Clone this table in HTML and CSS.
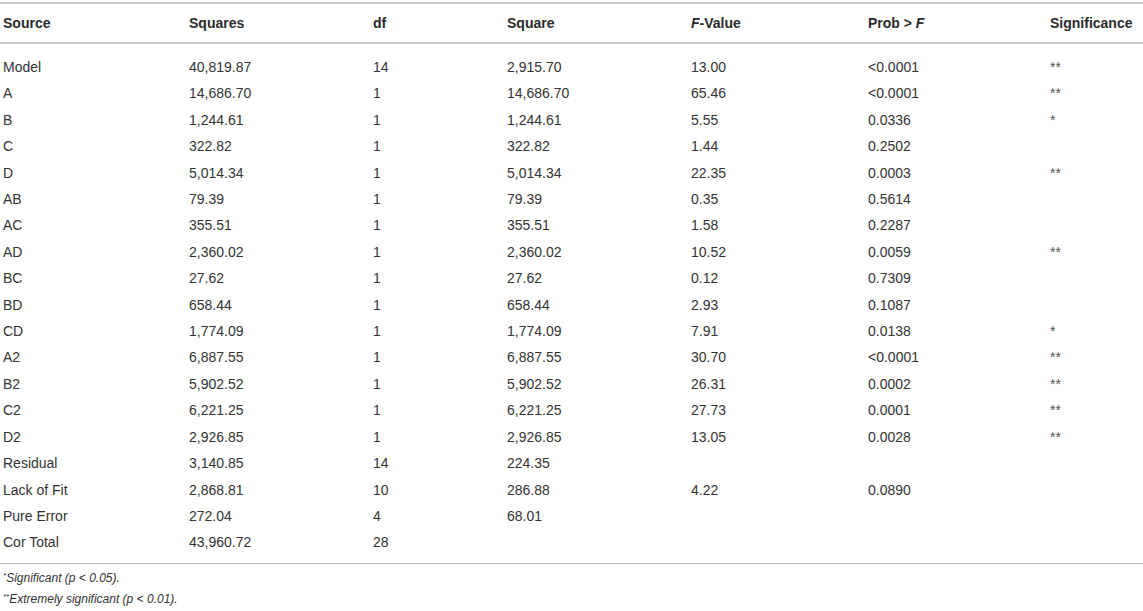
FILE: index.html
```html
<!DOCTYPE html>
<html lang="en">
<head>
<meta charset="utf-8">
<title>ANOVA table</title>
<link rel="stylesheet" href="styles.css">
</head>
<body>
<div class="wrap">
<table class="anova">
<colgroup>
<col class="c1"><col class="c2"><col class="c3"><col class="c4"><col class="c5"><col class="c6"><col class="c7">
</colgroup>
<thead>
<tr><th>Source</th><th>Squares</th><th>df</th><th>Square</th><th><i>F</i>-Value</th><th>Prob &gt; <i>F</i></th><th>Significance</th></tr>
</thead>
<tbody>
<tr><td>Model</td><td>40,819.87</td><td>14</td><td>2,915.70</td><td>13.00</td><td>&lt;0.0001</td><td class="sig">**</td></tr>
<tr><td>A</td><td>14,686.70</td><td>1</td><td>14,686.70</td><td>65.46</td><td>&lt;0.0001</td><td class="sig">**</td></tr>
<tr><td>B</td><td>1,244.61</td><td>1</td><td>1,244.61</td><td>5.55</td><td>0.0336</td><td class="sig">*</td></tr>
<tr><td>C</td><td>322.82</td><td>1</td><td>322.82</td><td>1.44</td><td>0.2502</td><td class="sig"></td></tr>
<tr><td>D</td><td>5,014.34</td><td>1</td><td>5,014.34</td><td>22.35</td><td>0.0003</td><td class="sig">**</td></tr>
<tr><td>AB</td><td>79.39</td><td>1</td><td>79.39</td><td>0.35</td><td>0.5614</td><td class="sig"></td></tr>
<tr><td>AC</td><td>355.51</td><td>1</td><td>355.51</td><td>1.58</td><td>0.2287</td><td class="sig"></td></tr>
<tr><td>AD</td><td>2,360.02</td><td>1</td><td>2,360.02</td><td>10.52</td><td>0.0059</td><td class="sig">**</td></tr>
<tr><td>BC</td><td>27.62</td><td>1</td><td>27.62</td><td>0.12</td><td>0.7309</td><td class="sig"></td></tr>
<tr><td>BD</td><td>658.44</td><td>1</td><td>658.44</td><td>2.93</td><td>0.1087</td><td class="sig"></td></tr>
<tr><td>CD</td><td>1,774.09</td><td>1</td><td>1,774.09</td><td>7.91</td><td>0.0138</td><td class="sig">*</td></tr>
<tr><td>A2</td><td>6,887.55</td><td>1</td><td>6,887.55</td><td>30.70</td><td>&lt;0.0001</td><td class="sig">**</td></tr>
<tr><td>B2</td><td>5,902.52</td><td>1</td><td>5,902.52</td><td>26.31</td><td>0.0002</td><td class="sig">**</td></tr>
<tr><td>C2</td><td>6,221.25</td><td>1</td><td>6,221.25</td><td>27.73</td><td>0.0001</td><td class="sig">**</td></tr>
<tr><td>D2</td><td>2,926.85</td><td>1</td><td>2,926.85</td><td>13.05</td><td>0.0028</td><td class="sig">**</td></tr>
<tr><td>Residual</td><td>3,140.85</td><td>14</td><td>224.35</td><td></td><td></td><td class="sig"></td></tr>
<tr><td>Lack of Fit</td><td>2,868.81</td><td>10</td><td>286.88</td><td>4.22</td><td>0.0890</td><td class="sig"></td></tr>
<tr><td>Pure Error</td><td>272.04</td><td>4</td><td>68.01</td><td></td><td></td><td class="sig"></td></tr>
<tr><td>Cor Total</td><td>43,960.72</td><td>28</td><td></td><td></td><td></td><td class="sig"></td></tr>
</tbody>
</table>
<div class="notes">
<p><sup>*</sup>Significant (p &lt; 0.05).</p>
<p><sup>**</sup>Extremely significant (p &lt; 0.01).</p>
</div>
</div>
</body>
</html>
```

FILE: styles.css
```css
html, body {
  margin: 0;
  padding: 0;
  background: #ffffff;
}
body {
  font-family: "Liberation Sans", Arial, sans-serif;
  color: #333333;
  font-size: 14px;
}
.wrap {
  width: 1143px;
  padding-top: 2px;
}
.anova {
  width: 1143px;
  table-layout: fixed;
  border-collapse: separate;
  border-spacing: 0;
}
.c1 { width: 186px; }
.c2 { width: 184px; }
.c3 { width: 134px; }
.c4 { width: 184px; }
.c5 { width: 177px; }
.c6 { width: 182px; }
.c7 { width: 96px; }
.anova th {
  text-align: left;
  font-weight: bold;
  color: #2b2b2b;
  line-height: 16px;
  padding: 11px 0 11px 3px;
  border-top: 2px solid #c6c6c6;
  border-bottom: 2px solid #c6c6c6;
  white-space: nowrap;
}
.anova td {
  line-height: 16.4px;
  padding: 5px 0 5px 3px;
  white-space: nowrap;
  vertical-align: middle;
}
.anova tbody tr:first-child td {
  padding-top: 15px;
}
.anova tbody tr:last-child td {
  padding-bottom: 12.4px;
  border-bottom: 1px solid #b4b4b4;
}
.sig {
  color: #555555;
}
.notes {
  padding-top: 4px;
  padding-left: 3px;
  font-size: 12px;
  font-style: italic;
  line-height: 21px;
}
.notes p {
  margin: 0;
}
.notes sup {
  font-size: 8px;
  line-height: 0;
  vertical-align: 4px;
}
```
